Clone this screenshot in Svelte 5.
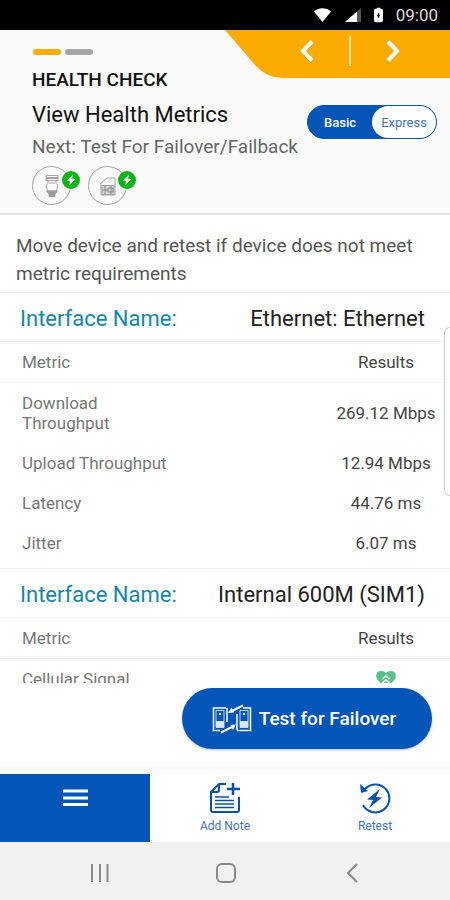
<script lang="ts">
	type Metric = { label: string; value?: string; healthy?: boolean };

	const interfaces: { name: string; metrics: Metric[] }[] = [
		{
			name: "Ethernet: Ethernet",
			metrics: [
				{ label: "Download Throughput", value: "269.12 Mbps" },
				{ label: "Upload Throughput", value: "12.94 Mbps" },
				{ label: "Latency", value: "44.76 ms" },
				{ label: "Jitter", value: "6.07 ms" },
			],
		},
		{
			name: "Internal 600M (SIM1)",
			metrics: [{ label: "Cellular Signal", healthy: true }],
		},
	];

	let mode = $state("express");
</script>

{#snippet bolt()}
	<svg class="bolt" viewBox="0 0 18 18" aria-hidden="true">
		<circle cx="9" cy="9" r="9" fill="#0db514" />
		<path d="M11 3.5 5 9.6l3.2.6L7 14.5l6.2-6.2-3.3-.7z" fill="#fff" />
	</svg>
{/snippet}

<div class="app">
	<div class="status">
		<svg width="17" height="14" viewBox="0 0 17 14" aria-hidden="true">
			<path d="M0 3.5C5-.8 12-.8 17 3.5L8.5 14z" fill="#fff" />
		</svg>
		<svg class="signal" width="16" height="14" viewBox="0 0 16 14" aria-hidden="true">
			<path d="M16 0v14H0z" fill="#555" />
			<path d="M12 3.5V14H0z" fill="#fff" />
		</svg>
		<svg class="battery" width="9" height="16" viewBox="0 0 10 16" aria-hidden="true">
			<path d="M3 0h4v1h1q2 0 2 2v11q0 2-2 2H2q-2 0-2-2V3q0-2 2-2h1z" fill="#fff" />
			<path d="M5 6v5M3.500 8.500h3" stroke="#111" stroke-width="1.5" />
		</svg>
		<span>09:00</span>
	</div>

	<header>
		<div class="top">
			<div class="step">
				<div class="progress"><i class="done"></i><i></i></div>
				<p class="section">HEALTH CHECK</p>
			</div>
			<nav class="pager">
				<svg class="shape" viewBox="0 0 225 48" preserveAspectRatio="none" aria-hidden="true">
					<path d="M0 0H225V48H57Q42 48 30 35z" fill="#fcab03" />
				</svg>
				<button aria-label="Previous step">
					<svg width="14" height="22" viewBox="0 0 14 22"><path d="M12 1.5 3 11l9 9.5" /></svg>
				</button>
				<span class="rule"></span>
				<button aria-label="Next step">
					<svg width="14" height="22" viewBox="0 0 14 22"><path d="m2 1.5 9 9.500-9 9.500" /></svg>
				</button>
			</nav>
		</div>

		<div class="heading">
			<div>
				<h1>View Health Metrics</h1>
				<p class="next">Next: Test For Failover/Failback</p>
			</div>
			<div class="toggle" role="radiogroup" aria-label="Mode">
				<label class:active={mode === "basic"}>
					<input type="radio" value="basic" bind:group={mode} />Basic
				</label>
				<label class:active={mode === "express"}>
					<input type="radio" value="express" bind:group={mode} />Express
				</label>
			</div>
		</div>

		<div class="links">
			<div class="link">
				<svg width="39" height="39" viewBox="0 0 39 39" fill="none" stroke="#a3a3a3" aria-hidden="true">
					<circle cx="19.5" cy="19.5" r="19" />
					<path d="M14 9.5h12v5H14z" />
					<path d="M14 12h12" stroke-width="2" />
					<path d="M16 14.5v3l-2 1.500 1.500 6h9l1.500-6-2-1.500v-3M17 17h6" />
					<path d="M14.500 25h11l-2.500 3v2.500h-6V28z" fill="#999" />
				</svg>
				{@render bolt()}
			</div>
			<div class="link">
				<svg width="39" height="39" viewBox="0 0 39 39" fill="none" stroke="#a3a3a3" aria-hidden="true">
					<circle cx="19.5" cy="19.5" r="19" />
					<path d="M13 29V17l6-5h8v17z" />
					<path d="M14 19.500h12v9H14z" fill="#d5d5d5" />
					<path d="M17 20v8M20 22h5v4h-5zM23 20v8M14 24h6" stroke="#888" />
				</svg>
				{@render bolt()}
			</div>
		</div>
	</header>

	<main>
		<p class="intro">Move device and retest if device does not meet metric requirements</p>
		{#each interfaces as item}
			<section>
				<h2><span>Interface Name:</span><span class="name">{item.name}</span></h2>
				<table>
					<thead>
						<tr><th scope="col">Metric</th><th scope="col">Results</th></tr>
					</thead>
					<tbody>
						{#each item.metrics as metric}
							<tr>
								<th scope="row">{metric.label}</th>
								<td>
									{#if metric.healthy}
										<svg class="heart" width="20" height="18" viewBox="0 0 20 18" role="img" aria-label="Good">
											<path d="M10 18 1.5 10C-1 6 0 1 5 1Q8.500 1 10 3 11.500 1 15 1C20 1 21 6 18.500 10z" fill="#5cc08b" />
											<path d="m6.500 9 3.500-3 3.500 3M6.500 13l3.500-3 3.500 3" fill="none" stroke="#fff" stroke-width="1.5" />
										</svg>
									{:else}
										{metric.value}
									{/if}
								</td>
							</tr>
						{/each}
					</tbody>
				</table>
			</section>
		{/each}
	</main>

	<div class="action">
		<button class="failover">
			<svg width="40" height="30" viewBox="0 0 40 30" fill="none" stroke="#fff" stroke-width="1.5" aria-hidden="true">
				<path d="M14 4H1.500v22.500H5M15 4v14M5 26.500h3" />
				<path d="M25 26.500h13.500V4H33M25 26.500V10M33 4h-2" />
				<path d="M4 6.500h8v17H4zM28 6.500h8v17h-8z" stroke="#c5d8f2" stroke-width="1" />
				<path d="M4 17h8v6H4zM28 17h8v6h-8z" fill="#dce8f8" stroke="none" />
				<path d="M7 9h2v2H7zM31 9h2v2h-2z" fill="#fff" stroke="none" />
				<path d="M31 1.500 19 7.500M9 28.500l12-6" stroke-width="2" />
				<path d="m16 9 3.500-5.500 2.500 5zM24 20.500l-5.500.5 2.500 5z" fill="#fff" stroke="none" />
			</svg>
			Test for Failover
		</button>
	</div>

	<nav class="tabs">
		<button class="menu" aria-label="Menu">
			<svg width="25" height="18" viewBox="0 0 25 18" aria-hidden="true">
				<path d="M0 2h25M0 9h25M0 15.500h25" stroke="#fff" stroke-width="3" />
			</svg>
		</button>
		<button>
			<svg width="32" height="32" viewBox="0 0 32 32" fill="none" stroke="#0a51ae" stroke-width="2" aria-hidden="true">
				<path d="M17 2h-7L2 10v18q0 2 2 2h24q2 0 2-2V15" />
				<path d="M3 10h5q2 0 2-2V3" />
				<path d="M24 1v12M18 7h13" stroke-width="2.5" />
				<path d="M6 15h14M6 18.500h19M6 22h19M6 25.500h19" stroke-width="1.5" />
			</svg>
			Add Note
		</button>
		<button>
			<svg width="32" height="32" viewBox="0 0 32 32" fill="none" stroke="#0a51ae" stroke-width="2" aria-hidden="true">
				<path d="M6 7A14 14 0 1 1 4 23" />
				<path d="m1 2 1 9 7-2z" fill="#0a51ae" stroke="none" />
				<path d="m21 7-13 10.500 6 .5-4 8 13-10.500-6-.5z" fill="#0a51ae" stroke="none" />
			</svg>
			Retest
		</button>
	</nav>

	<nav class="system">
		<button aria-label="Recent apps">
			<svg width="20" height="20" viewBox="0 0 20 20"><path d="M2 1v18M10 1v18M17.500 1v18" /></svg>
		</button>
		<button aria-label="Home">
			<svg width="20" height="20" viewBox="0 0 20 20"><rect x="1" y="1" width="18" height="18" rx="5" /></svg>
		</button>
		<button aria-label="Back">
			<svg width="20" height="20" viewBox="0 0 20 20"><path d="m15 1-9 9 9 9" /></svg>
		</button>
	</nav>

	<div class="handle"></div>
</div>

<style>
	:global(body) {
		margin: 0;
	}

	.app {
		position: relative;
		display: flex;
		flex-direction: column;
		height: 100vh;
		overflow: hidden;
		background: #fff;
		color: #444;
		font-family: Roboto, "Liberation Sans", sans-serif;
		font-size: 17px;
	}

	p,
	h1,
	h2 {
		margin: 0;
		font-weight: 400;
	}

	button {
		padding: 0;
		border: 0;
		background: none;
		font: inherit;
		cursor: pointer;
	}

	.status {
		display: flex;
		align-items: center;
		justify-content: flex-end;
		height: 30px;
		padding-right: 12px;
		background: #000;
		color: #ddd;
	}

	.signal {
		margin: 0 13px 0 14px;
	}

	.battery {
		margin-right: 13px;
	}

	header {
		background: #fafafa;
		border-bottom: 2px solid #e2e2e2;
		padding-bottom: 8px;
	}

	.top {
		display: flex;
		justify-content: space-between;
		align-items: flex-start;
	}

	.step {
		padding: 19px 0 0 32px;
	}

	.progress {
		display: flex;
		gap: 3px;
		margin-bottom: 15px;
	}

	.progress i {
		width: 28px;
		height: 6px;
		margin-left: 1px;
		border-radius: 3px;
		background: #a5a5a5;
	}

	.progress .done {
		background: #fcab03;
	}

	.section {
		color: #111;
		font-size: 19px;
		font-weight: 500;
		line-height: 20px;
	}

	.pager {
		position: relative;
		display: flex;
		align-items: center;
		box-sizing: border-box;
		width: 50%;
		height: 48px;
		padding: 0 50px 6px 75px;
		justify-content: space-between;
	}

	.pager .shape {
		position: absolute;
		inset: 0;
		width: 100%;
		height: 100%;
	}

	.pager button {
		position: relative;
		display: flex;
	}

	.pager button path {
		fill: none;
		stroke: #fff;
		stroke-width: 4;
	}

	.rule {
		position: relative;
		width: 2px;
		height: 30px;
		background: #ffe3a6;
	}

	.heading {
		display: flex;
		justify-content: space-between;
		align-items: flex-start;
		padding: 9px 13px 0 32px;
		white-space: nowrap;
	}

	h1 {
		color: #111;
		font-size: 22px;
		line-height: 32px;
	}

	.next {
		color: #666;
		font-size: 19px;
		line-height: 32px;
	}

	.toggle {
		display: flex;
		box-sizing: border-box;
		height: 34px;
		margin-top: 6px;
		border: 1px solid #0455b8;
		border-radius: 17px;
		background: #0455b8;
	}

	.toggle label {
		display: flex;
		align-items: center;
		justify-content: center;
		width: 64px;
		border-radius: 16px;
		color: #fff;
		font-size: 13px;
		font-weight: 500;
		cursor: pointer;
	}

	.toggle .active {
		background: #fff;
		color: #3f73c0;
		font-weight: 400;
	}

	.toggle input {
		position: absolute;
		opacity: 0;
		pointer-events: none;
	}

	.links {
		display: flex;
		gap: 17px;
		padding: 3px 32px 0;
	}

	.link {
		position: relative;
		display: flex;
	}

	.bolt {
		position: absolute;
		top: 5px;
		right: -9px;
		width: 18px;
		height: 18px;
	}

	main {
		flex: 1;
		min-height: 0;
		overflow-y: auto;
		scrollbar-width: none;
	}

	.intro {
		padding: 17px 16px 4px;
		color: #555;
		font-size: 19px;
		line-height: 28px;
	}

	section {
		padding-bottom: 5px;
		border-top: 1px solid #eee;
	}

	h2 {
		display: flex;
		justify-content: space-between;
		padding: 4px 25px 0 20px;
		border-bottom: 1px solid #f3f3f3;
		color: #1687a7;
		font-size: 22px;
		line-height: 44px;
	}

	.name {
		color: #222;
	}

	table {
		width: 100%;
		border-collapse: collapse;
		table-layout: fixed;
		line-height: 20px;
	}

	th,
	td {
		padding: 10px 0;
		font-weight: 400;
		text-align: center;
		vertical-align: middle;
	}

	th:first-child {
		width: 162px;
		padding: 10px 138px 10px 22px;
		color: #777;
		text-align: left;
	}

	thead th {
		border-bottom: 1px solid #f3f3f3;
	}

	.heart {
		display: block;
		margin: 0 auto;
	}

	.action {
		display: flex;
		justify-content: flex-end;
		padding: 5px 18px 13px;
		border-bottom: 12px solid #fafafa;
	}

	.failover {
		display: flex;
		align-items: center;
		justify-content: center;
		gap: 7px;
		width: 250px;
		height: 61px;
		padding-right: 6px;
		border-radius: 31px;
		background: #0455b8;
		box-shadow: 0 1px 3px #0004;
		color: #fff;
		font-size: 19px;
		font-weight: 500;
	}

	.tabs {
		display: flex;
		height: 68px;
	}

	.tabs button {
		display: flex;
		flex: 1;
		flex-direction: column;
		align-items: center;
		gap: 5px;
		padding-top: 8px;
		color: #3f73c0;
		font-size: 12px;
		line-height: 14px;
	}

	.tabs .menu {
		padding-top: 15px;
		background: #0455b8;
	}

	.system {
		display: flex;
		justify-content: space-between;
		height: 58px;
		padding: 0 88px 0 90px;
		background: #f1f1f1;
	}

	.system button {
		display: flex;
		align-items: center;
		padding-top: 3px;
	}

	.system path,
	.system rect {
		fill: none;
		stroke: #888;
		stroke-width: 2;
	}

	/* edge panel grip */
	.handle {
		position: absolute;
		top: 327px;
		right: 0;
		width: 5px;
		height: 167px;
		border: 1px solid #ccc;
		border-right: 0;
		border-radius: 6px 0 0 6px;
		background: #fff;
	}
</style>
